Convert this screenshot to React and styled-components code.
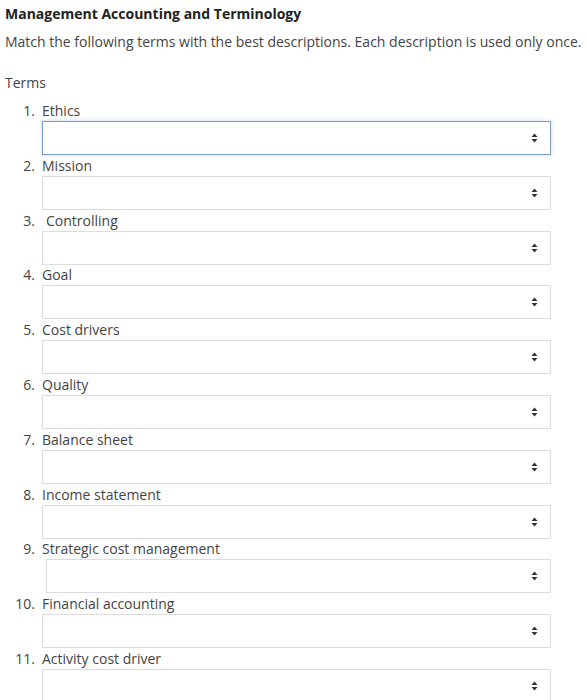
import React from "react";
import styled, { createGlobalStyle } from "styled-components";

const GlobalStyle = createGlobalStyle`
  body {
    margin: 0;
    background: #fff;
    font-family: "Open Sans", "Liberation Sans", sans-serif;
    color: #333;
  }
`;

const Page = styled.div`
  padding: 4px 5px;
  width: 587px;
  box-sizing: border-box;
`;

const Title = styled.h1`
  margin: 0;
  font-size: 14px;
  font-weight: 700;
  line-height: 20px;
  color: #222;
`;

const Intro = styled.p`
  margin: 8px 0 0;
  font-size: 14px;
  line-height: 20px;
  color: #444;
  white-space: nowrap;
`;

const SectionLabel = styled.div`
  margin-top: 21px;
  font-size: 14px;
  line-height: 20px;
  color: #444;
`;

const TermList = styled.ol`
  list-style: none;
  margin: 8px 0 0;
  padding: 0;
  display: flex;
  flex-direction: column;
  gap: 0.8px;
`;

const TermItem = styled.li`
  display: grid;
  grid-template-columns: 30px 509px;
  column-gap: 7px;
`;

const Num = styled.span`
  text-align: right;
  font-size: 14px;
  line-height: 20px;
  color: #444;
`;

const Label = styled.span`
  font-size: 14px;
  line-height: 20px;
  color: #444;
  padding-left: ${(p) => (p.$shift ? 4 : 0)}px;
`;

const SelectBox = styled.div`
  grid-column: 2;
  margin-left: ${(p) => (p.$shift ? 4 : 0)}px;
  height: 34px;
  box-sizing: border-box;
  border: 1px solid ${(p) => (p.$focused ? "#7d9bc4" : "#dcdcdc")};
  box-shadow: ${(p) =>
    p.$focused ? "0 0 4px rgba(120, 170, 230, 0.45)" : "none"};
  background: #fff;
  display: flex;
  align-items: center;
  justify-content: flex-end;
  padding-right: 12px;
`;

const Arrows = () => (
  <svg width="7" height="10" viewBox="0 0 7 10">
    <path d="M3.5 0.5 L6.5 4 L0.5 4 Z" fill="#333" />
    <path d="M3.5 9.5 L6.5 6 L0.5 6 Z" fill="#333" />
  </svg>
);

const terms = [
  { label: "Ethics", focused: true },
  { label: "Mission" },
  { label: "Controlling", shiftLabel: true },
  { label: "Goal" },
  { label: "Cost drivers" },
  { label: "Quality" },
  { label: "Balance sheet" },
  { label: "Income statement" },
  { label: "Strategic cost management", shiftBox: true },
  { label: "Financial accounting" },
  { label: "Activity cost driver" },
];

export default function App() {
  return (
    <Page>
      <GlobalStyle />
      <Title>Management Accounting and Terminology</Title>
      <Intro>
        Match the following terms with the best descriptions. Each description
        is used only once.
      </Intro>
      <SectionLabel>Terms</SectionLabel>
      <TermList>
        {terms.map((t, i) => (
          <TermItem key={t.label}>
            <Num>{i + 1}.</Num>
            <Label $shift={t.shiftLabel}>{t.label}</Label>
            <SelectBox $focused={t.focused} $shift={t.shiftBox}>
              <Arrows />
            </SelectBox>
          </TermItem>
        ))}
      </TermList>
    </Page>
  );
}
